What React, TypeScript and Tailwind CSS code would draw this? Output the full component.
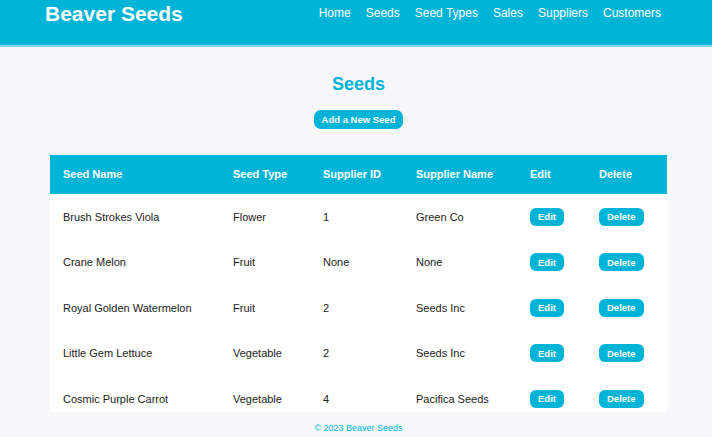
const navLinks = ['Home', 'Seeds', 'Seed Types', 'Sales', 'Suppliers', 'Customers'];

const seeds = [
  { name: 'Brush Strokes Viola', type: 'Flower', supplierId: '1', supplier: 'Green Co' },
  { name: 'Crane Melon', type: 'Fruit', supplierId: 'None', supplier: 'None' },
  { name: 'Royal Golden Watermelon', type: 'Fruit', supplierId: '2', supplier: 'Seeds Inc' },
  { name: 'Little Gem Lettuce', type: 'Vegetable', supplierId: '2', supplier: 'Seeds Inc' },
  { name: 'Cosmic Purple Carrot', type: 'Vegetable', supplierId: '4', supplier: 'Pacifica Seeds' },
];

const SmallButton = ({ label }: { label: string }) => (
  <button className="h-[18px] rounded-[6px] bg-[#00b4d8] px-[8px] text-[9.5px] font-bold leading-none text-white">
    {label}
  </button>
);

export default function App() {
  return (
    <div className="flex h-[437px] w-full flex-col overflow-hidden bg-[#f7f8fa] font-['Liberation_Sans',Arial,sans-serif]">
      <header className="flex h-[47px] shrink-0 items-start justify-between border-b-2 border-[#7fd6ea] bg-[#00b4d8] pl-[45px] pr-[51px]">
        <h1 className="pt-[1px] text-[21px] font-bold leading-[26px] text-white">Beaver Seeds</h1>
        <nav className="flex gap-[15px] pt-[5px]">
          {navLinks.map((link) => (
            <a key={link} href="#" className="text-[12px] leading-[16px] text-white">
              {link}
            </a>
          ))}
        </nav>
      </header>

      <main className="flex flex-col items-center pl-[5px] pt-[26px]">
        <h2 className="text-[18px] font-bold leading-[22px] text-[#00b4d8]">Seeds</h2>
        <button className="mt-[15px] h-[19px] rounded-[7px] bg-[#00b4d8] px-[8px] text-[9.5px] font-bold leading-none text-white">
          Add a New Seed
        </button>

        <div className="mt-[26px] h-[257px] w-[617px] overflow-hidden bg-white">
          <table className="w-full border-collapse text-left">
            <thead>
              <tr className="h-[39px] bg-[#00b4d8] text-[11px] font-bold text-white">
                <th className="w-[170px] pl-[13px]">Seed Name</th>
                <th className="w-[90px] pl-[13px]">Seed Type</th>
                <th className="w-[93px] pl-[13px]">Supplier ID</th>
                <th className="w-[114px] pl-[13px]">Supplier Name</th>
                <th className="w-[69px] pl-[13px]">Edit</th>
                <th className="pl-[13px]">Delete</th>
              </tr>
            </thead>
            <tbody>
              {seeds.map((seed) => (
                <tr key={seed.name} className="h-[45.5px] text-[11px] text-[#222222]">
                  <td className="pl-[13px]">{seed.name}</td>
                  <td className="pl-[13px]">{seed.type}</td>
                  <td className="pl-[13px]">{seed.supplierId}</td>
                  <td className="pl-[13px]">{seed.supplier}</td>
                  <td className="pl-[13px]">
                    <SmallButton label="Edit" />
                  </td>
                  <td className="pl-[13px]">
                    <SmallButton label="Delete" />
                  </td>
                </tr>
              ))}
            </tbody>
          </table>
        </div>

        <footer className="mt-[10px] text-[9px] leading-[12px] text-[#00b4d8]">© 2023 Beaver Seeds</footer>
      </main>
    </div>
  );
}
